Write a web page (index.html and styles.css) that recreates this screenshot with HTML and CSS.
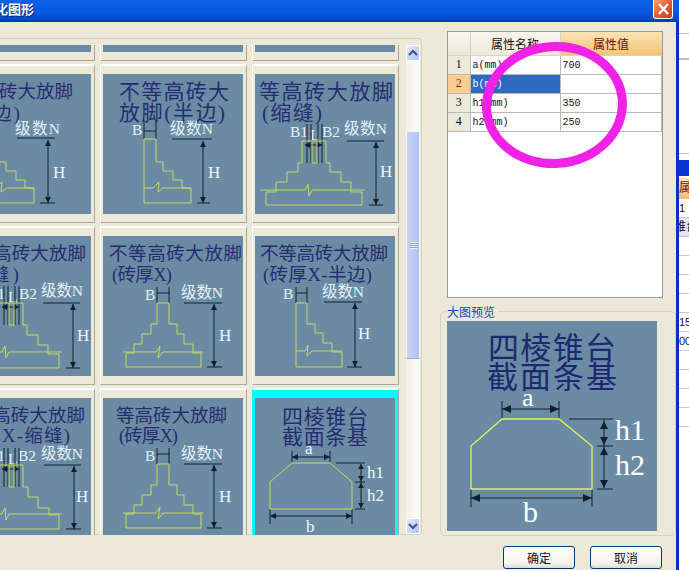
FILE: index.html
```html
<!DOCTYPE html>
<html lang="zh">
<head>
<meta charset="utf-8">
<title>化图形</title>
<link rel="stylesheet" href="styles.css">
</head>
<body>
<div class="screen">
  <div class="dialog">
    <div class="titlebar">
      <span class="title-text">化图形</span>
      <button class="close" type="button" aria-label="关闭">
        <svg viewBox="0 0 19 18" width="19" height="18"><path class="close-x" d="M5 4l9 10M14 4l-9 10"/></svg>
      </button>
    </div>
    <div class="content">
      <div class="list-panel">
        <div class="thumb-view">
          <div class="thumb-grid">
            <div class="cell"><div class="pic"></div></div>
            <div class="cell"><div class="pic"></div></div>
            <div class="cell"><div class="pic"></div></div>

            <div class="cell"><div class="pic">
              <svg class="dia" viewBox="0 0 140 140">
                <text class="t" x="11" y="24" textLength="111">等高砖大放脚</text>
                <text class="t" x="13" y="46" textLength="56">(半边)</text>
                <text class="l" x="64" y="60" textLength="45">级数N</text>
                <text class="l" x="24" y="61">B</text>
                <text class="h" x="102" y="104">H</text>
                <path class="d" d="M36 46V65M48 46V65M36 57H48M66 64H104M89 129H104M97 66V129"/>
                <path class="a" d="M97 66l-3 6h6zM97 129l-3-6h6z"/>
                <path class="s" d="M36 65H48V88H55V97H65V106H74V114H83V129H36ZM36 114H45L51 108L50 118L56 114H83"/>
              </svg>
            </div></div>

            <div class="cell"><div class="pic">
              <svg class="dia" viewBox="0 0 140 140">
                <text class="tw" x="16" y="25" textLength="110">不等高砖大</text>
                <text class="tw" x="16" y="46" textLength="106">放脚(半边)</text>
                <text class="l" x="29" y="61">B</text>
                <text class="l" x="67" y="60" textLength="43">级数N</text>
                <text class="h" x="105" y="104">H</text>
                <path class="d" d="M41 46V65M53 46V65M41 57H53M69 65H109M94 129H107M100 67V129"/>
                <path class="a" d="M100 67l-3 6h6zM100 129l-3-6h6z"/>
                <path class="s" d="M41 65H53V88H60V97H70V106H79V114H88V129H41ZM41 114H50L56 108L55 118L60 114H88"/>
              </svg>
            </div></div>

            <div class="cell"><div class="pic">
              <svg class="dia" viewBox="0 0 140 140">
                <text class="tw" x="4" y="25" textLength="134">等高砖大放脚</text>
                <text class="tw" x="7" y="46" textLength="60">(缩缝)</text>
                <text class="l" x="35" y="63">B1</text>
                <text class="l" x="67" y="63">B2</text>
                <text class="l" x="89" y="60" textLength="43">级数N</text>
                <text class="l" x="55" y="66">L</text>
                <text class="h" x="125" y="103">H</text>
                <path class="d" d="M52 50V89M56 50V89M63 50V89M67 50V89M92 67H129M114 131H128M121 68V131M50 71H67"/>
                <path class="a" d="M121 68l-3 6h6zM121 131l-3-6h6zM50 71l5-3v6zM67 71l-5-3v6z"/>
                <path class="s" d="M47 67H71V89H75V98H86V108H96V118H107V131H11V118H21V108H32V98H43V89H47ZM5 116H50L53 110L54 122L57 116H110M57 67V89H62V67"/>
              </svg>
            </div></div>

            <div class="cell"><div class="pic">
              <svg class="dia" viewBox="0 0 140 140">
                <text class="t" x="5" y="24" textLength="130">不等高砖大放脚</text>
                <text class="t" x="8" y="45" textLength="60">(缩缝)</text>
                <text class="l" x="36" y="63">B1</text>
                <text class="l" x="68" y="63">B2</text>
                <text class="l" x="90" y="60" textLength="42">级数N</text>
                <text class="l" x="57" y="66">L</text>
                <text class="h" x="126" y="105">H</text>
                <path class="d" d="M53 50V89M57 50V89M64 50V89M68 50V89M92 67H129M115 132H129M122 68V132M51 71H68"/>
                <path class="a" d="M122 68l-3 6h6zM122 132l-3-6h6zM51 71l5-3v6zM68 71l-5-3v6z"/>
                <path class="s" d="M48 67H72V89H76V99H87V109H97V118H108V132H12V118H22V109H33V99H44V89H48ZM6 116H51L54 110L55 122L58 116H111M58 67V89H63V67"/>
              </svg>
            </div></div>

            <div class="cell"><div class="pic">
              <svg class="dia" viewBox="0 0 140 140">
                <text class="t" x="6" y="24" textLength="133">不等高砖大放脚</text>
                <text class="t" x="9" y="45" textLength="60">(砖厚X)</text>
                <text class="l" x="42" y="64">B</text>
                <text class="l" x="78" y="62" textLength="42">级数N</text>
                <text class="h" x="116" y="105">H</text>
                <path class="d" d="M54 51V67M66 51V67M54 57H66M81 67H119M104 131H119M111 68V131"/>
                <path class="a" d="M111 68l-3 6h6zM111 131l-3-6h6z"/>
                <path class="s" d="M54 67H66V88H74V98H81V108H90V117H98V131H23V117H31V108H39V98H48V88H54ZM20 116H53L57 110L55 122L60 116H100"/>
              </svg>
            </div></div>

            <div class="cell"><div class="pic">
              <svg class="dia" viewBox="0 0 140 140">
                <text class="t" x="5" y="24" textLength="128">不等高砖大放脚</text>
                <text class="t" x="8" y="45" textLength="109">(砖厚X-半边)</text>
                <text class="l" x="28" y="63">B</text>
                <text class="l" x="67" y="61" textLength="42">级数N</text>
                <text class="h" x="103" y="103">H</text>
                <path class="d" d="M41 51V67M52 51V67M41 57H52M69 66H107M92 131H107M100 67V131"/>
                <path class="a" d="M100 67l-3 6h6zM100 131l-3-6h6z"/>
                <path class="s" d="M41 67H52V88H60V97H68V107H77V116H87V131H41ZM41 115H50L53 109L52 120L57 115H87"/>
              </svg>
            </div></div>

            <div class="cell"><div class="pic">
              <svg class="dia" viewBox="0 0 140 140">
                <text class="t" x="4" y="24" textLength="130">不等高砖大放脚</text>
                <text class="t" x="4" y="44" textLength="115">(砖厚X-缩缝)</text>
                <text class="l" x="36" y="63">B1</text>
                <text class="l" x="67" y="63">B2</text>
                <text class="l" x="90" y="61" textLength="42">级数N</text>
                <text class="l" x="57" y="66">L</text>
                <text class="h" x="125" y="104">H</text>
                <path class="d" d="M53 50V89M57 50V89M64 50V89M68 50V89M93 67H130M115 131H130M123 68V131M51 71H68"/>
                <path class="a" d="M123 68l-3 6h6zM123 131l-3-6h6zM51 71l5-3v6zM68 71l-5-3v6z"/>
                <path class="s" d="M48 67H72V89H77V99H87V110H98V117H108V131H12V117H22V110H33V99H43V89H48ZM6 116H51L54 110L55 122L58 116H111M58 67V89H63V67"/>
              </svg>
            </div></div>

            <div class="cell"><div class="pic">
              <svg class="dia" viewBox="0 0 140 140">
                <text class="t" x="13" y="24" textLength="111">等高砖大放脚</text>
                <text class="t" x="16" y="44" textLength="59">(砖厚X)</text>
                <text class="l" x="42" y="63">B</text>
                <text class="l" x="78" y="61" textLength="42">级数N</text>
                <text class="h" x="116" y="104">H</text>
                <path class="d" d="M54 50V67M66 50V67M54 56H66M81 66H119M104 130H119M111 67V130"/>
                <path class="a" d="M111 67l-3 6h6zM111 130l-3-6h6z"/>
                <path class="s" d="M54 66H66V87H74V97H81V107H90V116H98V130H23V116H31V107H39V97H48V87H54ZM20 115H53L57 109L55 121L60 115H100"/>
              </svg>
            </div></div>

            <div class="cell selected"><div class="pic">
              <svg class="dia" viewBox="0 0 140 140">
                <text class="tw" x="27" y="26" textLength="86">四棱锥台</text>
                <text class="tw" x="27" y="46" textLength="86">截面条基</text>
                <text class="m" x="50" y="56">a</text>
                <text class="m" x="112" y="80">h1</text>
                <text class="m" x="112" y="103">h2</text>
                <text class="m" x="51" y="134">b</text>
                <path class="d" d="M37 53V64M75 53V64M37 59H75M81 65H110M100 84H110M100 111H110M106 66V110M15 118H97M15 111V126M97 111V126"/>
                <path class="a" d="M37 59l6-3v6zM75 59l-6-3v6zM106 66l-3 5h6zM106 83l-3-5h6zM106 85l-3 5h6zM106 110l-3-5h6zM15 118l6-3v6zM97 118l-6-3v6z"/>
                <path class="s" d="M37 65H75L97 84V111H15V84Z"/>
              </svg>
            </div></div>
          </div>
        </div>
        <div class="scrollbar">
          <div class="sb-btn"><svg viewBox="0 0 14 16" width="14" height="16"><path class="chev" d="M3 10l4-4 4 4"/></svg></div>
          <div class="sb-track">
            <div class="sb-thumb"><span class="grip"></span></div>
          </div>
          <div class="sb-btn"><svg viewBox="0 0 14 16" width="14" height="16"><path class="chev" d="M3 6l4 4 4-4"/></svg></div>
        </div>
      </div>

      <div class="side">
        <div class="grid-box">
          <table class="props">
            <thead>
              <tr><th class="rh"></th><th class="hn">属性名称</th><th class="hv">属性值</th></tr>
            </thead>
            <tbody>
              <tr><td class="rh">1</td><td>a(mm)</td><td>700</td></tr>
              <tr><td class="rh rh-on">2</td><td class="sel">b(mm)</td><td></td></tr>
              <tr><td class="rh">3</td><td>h1(mm)</td><td>350</td></tr>
              <tr><td class="rh">4</td><td>h2(mm)</td><td>250</td></tr>
            </tbody>
          </table>
        </div>
        <div class="group">
          <span class="group-label">大图预览</span>
          <div class="preview">
            <svg class="dia" viewBox="0 0 210 210">
              <text class="tb" x="41" y="38" textLength="128">四棱锥台</text>
              <text class="tb" x="40" y="67" textLength="130">截面条基</text>
              <text class="mb" x="75" y="85">a</text>
              <text class="mb2" x="168" y="119">h1</text>
              <text class="mb2" x="168" y="154">h2</text>
              <text class="mb2" x="76" y="201">b</text>
              <path class="d" d="M55 80V97M112 80V97M55 88H112M122 98H166M150 125H166M150 168H166M157 99V167M24 177H145M24 168V186M145 168V186"/>
              <path class="a" d="M55 88l9-4v8zM112 88l-9-4v8zM157 100l-4 8h8zM157 124l-4-8h8zM157 126l-4 8h8zM157 167l-4-8h8zM24 177l9-4v8zM145 177l-9-4v8z"/>
              <path class="s s-big" d="M55 98H112L145 125V168H24V125Z"/>
            </svg>
          </div>
        </div>
        <div class="buttons">
          <button class="btn" type="button">确定</button>
          <button class="btn" type="button">取消</button>
        </div>
      </div>
    </div>
  </div>

  <div class="behind">
    <div class="b-gap b33"></div>
    <div class="b-gap b24 line-thick"></div>
    <div class="b-gap b93"></div>
    <div class="b-gap b6"></div>
    <div class="b-blue"></div>
    <div class="b-head">属</div>
    <div class="b-row">1</div>
    <div class="b-row b-tint b-clip">锥台</div>
    <div class="b-row"></div>
    <div class="b-row"></div>
    <div class="b-row"></div>
    <div class="b-row"></div>
    <div class="b-row">15</div>
    <div class="b-row">00</div>
    <div class="b-row"></div>
    <div class="b-row"></div>
    <div class="b-row"></div>
    <div class="b-row"></div>
  </div>

  <div class="ring"></div>
</div>
</body>
</html>
```
FILE: styles.css
```css
* { box-sizing: border-box; }
html, body { margin: 0; padding: 0; background: #fff; }
body { font-family: "Noto Sans CJK SC", sans-serif; }

.screen {
  position: relative;
  display: flex;
  width: 689px;
  height: 570px;
  overflow: hidden;
}

/* dialog */
.dialog {
  width: 679px;
  height: 570px;
  flex: none;
  background: #ece9d8;
  border-right: 3px solid #0a2fc4;
}
.titlebar {
  height: 22px;
  margin-right: -3px;
  display: flex;
  align-items: flex-start;
  justify-content: space-between;
  padding-right: 6px;
  background: linear-gradient(#0a60e8 0, #0a5ae0 55%, #0448d4 85%, #0038b8 100%);
  overflow: hidden;
}
.title-text {
  margin-left: -5px;
  font-size: 13px;
  line-height: 17px;
  font-weight: 700;
  color: #fff;
  text-shadow: 1px 1px 0 #0a2a80;
}
.close {
  width: 20px;
  height: 19px;
  padding: 0;
  margin: 0;
  display: block;
  border: 1px solid #fff;
  border-top: 0;
  border-radius: 0 0 3px 3px;
  background: linear-gradient(135deg, #f0a080, #e0582c 55%, #c8401c);
}
.close svg { display: block; }
.close-x { fill: none; stroke: #fff; stroke-width: 2.4; }

.content { display: flex; align-items: flex-start; }

/* thumbnail list */
.list-panel {
  width: 422px;
  height: 497px;
  flex: none;
  margin-top: 16px;
  padding: 6px 1px 0 0;
  display: flex;
  border: 1px solid #d6d2c0;
  border-left: 0;
  border-radius: 0 4px 4px 0;
}
.thumb-view {
  width: 405px;
  height: 490px;
  flex: none;
  overflow: hidden;
}
.thumb-grid {
  display: grid;
  grid-template-columns: repeat(3, 147px);
  grid-auto-rows: 159px;
  column-gap: 5px;
  row-gap: 3px;
  margin: -143px 0 0 -52px;
}
.cell {
  height: 159px;
  padding: 8px 3px 8px 2px;
  background: #ece9d8;
  border: 1px solid #fff;
  border-width: 2px 1px 1px 1px;
  border-right-color: #aca899;
  border-bottom-color: #aca899;
}
.cell.selected {
  background: #00ffff;
  border-left-color: #00ffff;
  border-right-color: #aca899;
}
.pic {
  width: 140px;
  height: 140px;
  background: #6b8ba4;
}
.dia { display: block; width: 100%; height: 100%; }

.t, .tw, .tb, .l, .h, .m, .mb, .mb2 {
  font-family: "Liberation Serif", "Noto Sans CJK SC", serif;
}
.t { font-size: 18.5px; fill: #262c70; }
.tw { font-size: 21px; fill: #262c70; }
.tb { font-size: 31px; fill: #1e2870; }
.l { font-size: 15.5px; fill: #e4f0f6; }
.h { font-size: 17px; fill: #eef6fa; }
.m { font-size: 17px; fill: #eef6fa; }
.mb { font-size: 26px; fill: #fff; }
.mb2 { font-size: 30px; fill: #fff; }
.s { fill: none; stroke: #c6d864; stroke-width: 1; }
.s-big { stroke: #e4ee5c; stroke-width: 1.3; }
.d { fill: none; stroke: #10202c; stroke-width: 1; }
.a { fill: #10202c; stroke: none; }

/* scrollbar */
.scrollbar {
  width: 15px;
  margin-left: 1px;
  height: 489px;
  display: flex;
  flex-direction: column;
  background: linear-gradient(90deg, #f3f1e6, #fdfdfa);
}
.sb-btn {
  width: 14px;
  height: 16px;
  flex: none;
  border: 1px solid #fff;
  border-radius: 2px;
  background: linear-gradient(135deg, #e2e8fc, #b4c4f2);
  display: flex;
}
.sb-btn svg { margin: -1px; flex: none; }
.chev { fill: none; stroke: #40508c; stroke-width: 2; }
.sb-track { flex: 1; padding-top: 70px; }
.sb-thumb {
  width: 14px;
  height: 228px;
  background: linear-gradient(90deg, #c6d2f6, #bac9f4 70%, #aebef0);
  border: 1px solid #f2f4fc;
  border-bottom-color: #97a8dc;
  display: flex;
  align-items: center;
  justify-content: center;
}
.grip {
  width: 7px;
  height: 7px;
  background: repeating-linear-gradient(#eef1fc 0 1px, #8c9ed8 1px 2px);
}

/* right side */
.side { width: 236px; margin-left: 18px; flex: none; }
.grid-box {
  width: 216px;
  height: 267px;
  margin: 9px 0 0 7px;
  background: #fff;
  border: 1px solid #8c9ca8;
}
.props {
  border-collapse: collapse;
  table-layout: fixed;
  width: 214px;
  font-family: "Liberation Mono", "Noto Sans CJK SC", monospace;
  font-size: 10px;
  color: #111;
}
.props th {
  height: 23px;
  padding: 0;
  font-family: "Noto Sans CJK SC", sans-serif;
  font-size: 12px;
  font-weight: 400;
  background: linear-gradient(#f8f6ec, #ece9d8);
  border-bottom: 1px solid #d8d4c4;
  border-right: 1px solid #d8d4c4;
}
.props th.rh { width: 22px; }
.props th.hn { width: 90px; }
.props th.hv {
  color: #6a1010;
  background: linear-gradient(#fbe3b4, #f3c478);
  border-right: 0;
}
.props td {
  height: 19px;
  padding: 1px 0 0 2px;
  border: 1px solid #b8b8b8;
  border-top: 0;
  white-space: nowrap;
}
.props td.rh {
  padding: 0;
  text-align: center;
  font-family: "Liberation Serif", serif;
  font-size: 12px;
  background: #ece9d8;
  border-left: 0;
}
.props td.rh-on { background: #f8ce8e; color: #a01818; }
.props td.sel { background: #2f68bf; color: #fff; }

.group {
  height: 225px;
  margin-top: 13px;
  padding: 0 0 0 6px;
  border: 1px solid #d6d2c0;
  border-radius: 5px;
}
.group-label {
  display: block;
  width: max-content;
  margin-top: -10px;
  padding-right: 3px;
  height: 19px;
  line-height: 19px;
  font-size: 12px;
  color: #1448b8;
  background: #ece9d8;
}
.preview { width: 210px; height: 210px; background: #6b8ba4; }

.buttons {
  display: flex;
  justify-content: flex-end;
  gap: 15px;
  margin-top: 10px;
  padding-right: 14px;
}
.btn {
  width: 72px;
  height: 23px;
  padding: 0;
  font-family: "Noto Sans CJK SC", sans-serif;
  font-size: 12px;
  color: #111;
  border: 1px solid #003c74;
  border-radius: 3px;
  background: linear-gradient(#fff, #f4f3ec 80%, #dcd8c8);
}

/* window behind the dialog */
.behind {
  flex: 1;
  overflow: hidden;
  font-family: "Liberation Sans", "Noto Sans CJK SC", sans-serif;
  font-size: 11px;
  color: #111;
}
.b-gap { border-bottom: 1px solid #c0c0c0; }
.b33 { height: 34px; }
.b24 { height: 26px; }
.line-thick { border-bottom-width: 2px; }
.b93 { height: 94px; }
.b6 { height: 6px; border-bottom: 0; }
.b-blue { height: 16px; background: #0a33d0; }
.b-head {
  height: 21px;
  margin-top: 2px;
  line-height: 21px;
  font-size: 12px;
  color: #7a1010;
  background: linear-gradient(#fbe3b4, #f0bc70);
}
.b-row {
  height: 19px;
  line-height: 18px;
  border-bottom: 1px solid #c8c8c8;
  white-space: nowrap;
}
.b-tint { background: #dfe8f2; }
.b-clip { text-indent: -5px; font-size: 12px; }

/* hand-drawn ring over the grid */
.ring {
  position: absolute;
  left: 482px;
  top: 42px;
  width: 145px;
  height: 126px;
  border: 9px solid #f022e6;
  border-radius: 50%;
  transform: rotate(-4deg);
}
```
